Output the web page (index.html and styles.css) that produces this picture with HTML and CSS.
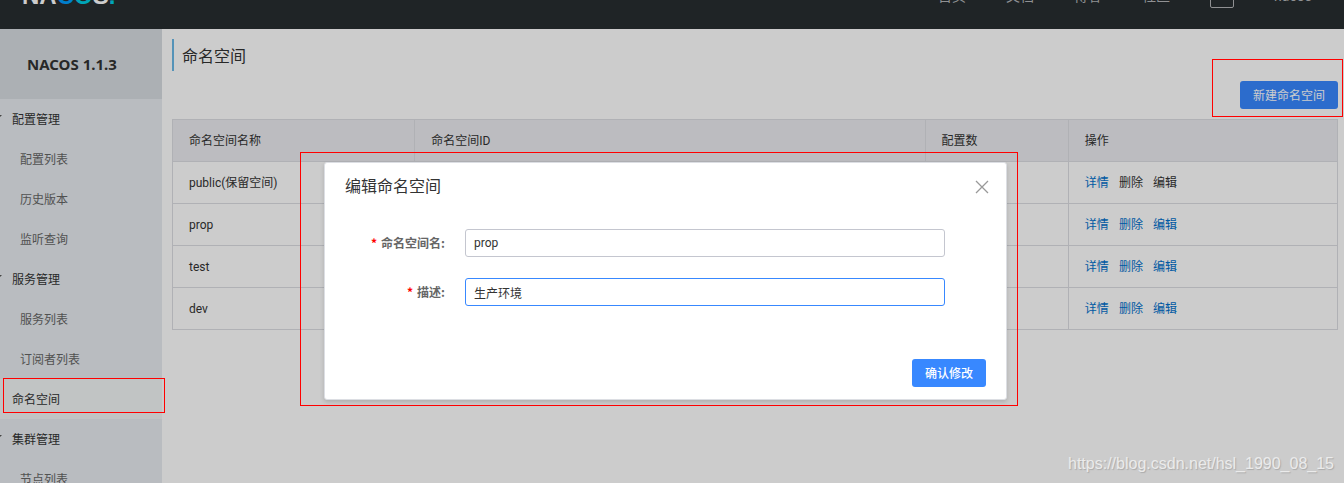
FILE: index.html
```html
<!DOCTYPE html>
<html lang="zh-CN">
<head>
  <meta charset="UTF-8">
  <meta name="viewport" content="width=device-width, initial-scale=1.0">
  <title>Nacos</title>
  <link rel="stylesheet" href="styles.css">
</head>
<body>
  <header class="header">
    <a href="#" class="logo">NA<span class="logo-c">C</span><span class="logo-o">O</span>S<span class="logo-dot">.</span></a>
    <nav class="nav">
      <a href="#">首页</a>
      <a href="#">文档</a>
      <a href="#">博客</a>
      <a href="#">社区</a>
      <button type="button" class="lang-button" aria-label="En"></button>
      <a href="#">nacos</a>
    </nav>
  </header>

  <div class="layout">
    <aside class="sidebar">
      <h1 class="sidebar-title">NACOS 1.1.3</h1>
      <ul class="menu">
        <li><a href="#" class="menu-group">配置管理</a></li>
        <li><a href="#" class="menu-sub">配置列表</a></li>
        <li><a href="#" class="menu-sub">历史版本</a></li>
        <li><a href="#" class="menu-sub">监听查询</a></li>
        <li><a href="#" class="menu-group">服务管理</a></li>
        <li><a href="#" class="menu-sub">服务列表</a></li>
        <li><a href="#" class="menu-sub">订阅者列表</a></li>
        <li><a href="#" class="menu-item active">命名空间</a></li>
        <li><a href="#" class="menu-group">集群管理</a></li>
        <li><a href="#" class="menu-sub">节点列表</a></li>
      </ul>
    </aside>

    <main class="main">
      <h2 class="page-title">命名空间</h2>
      <div class="toolbar">
        <button type="button" class="button">新建命名空间</button>
      </div>
      <table class="table">
        <thead>
          <tr>
            <th class="col-name">命名空间名称</th>
            <th class="col-id">命名空间ID</th>
            <th class="col-count">配置数</th>
            <th>操作</th>
          </tr>
        </thead>
        <tbody>
          <tr>
            <td>public(保留空间)</td>
            <td></td>
            <td></td>
            <td><div class="actions"><a href="#">详情</a><span>删除</span><span>编辑</span></div></td>
          </tr>
          <tr>
            <td>prop</td>
            <td></td>
            <td></td>
            <td><div class="actions"><a href="#">详情</a><a href="#">删除</a><a href="#">编辑</a></div></td>
          </tr>
          <tr>
            <td>test</td>
            <td></td>
            <td></td>
            <td><div class="actions"><a href="#">详情</a><a href="#">删除</a><a href="#">编辑</a></div></td>
          </tr>
          <tr>
            <td>dev</td>
            <td></td>
            <td></td>
            <td><div class="actions"><a href="#">详情</a><a href="#">删除</a><a href="#">编辑</a></div></td>
          </tr>
        </tbody>
      </table>
    </main>
  </div>

  <div class="overlay">
    <div class="dialog" role="dialog" aria-labelledby="dialog-title">
      <div class="dialog-header">
        <h2 id="dialog-title" class="dialog-title">编辑命名空间</h2>
        <button type="button" class="dialog-close" aria-label="关闭">
          <svg width="14" height="14" viewBox="0 0 14 14" fill="none" stroke="#999" stroke-width="1.3">
            <path d="M1 1l12 12M13 1L1 13"/>
          </svg>
        </button>
      </div>
      <form class="dialog-form">
        <div class="form-row">
          <label for="ns-name" class="form-label">命名空间名:</label>
          <input type="text" id="ns-name" class="form-input" value="prop">
        </div>
        <div class="form-row">
          <label for="ns-desc" class="form-label">描述:</label>
          <input type="text" id="ns-desc" class="form-input current" value="生产环境">
        </div>
      </form>
      <div class="dialog-footer">
        <button type="button" class="button button-confirm">确认修改</button>
      </div>
    </div>
  </div>

  <div class="mark mark-menu"></div>
  <div class="mark mark-create"></div>
  <div class="watermark">https://blog.csdn.net/hsl_1990_08_15</div>
</body>
</html>
```

FILE: styles.css
```css
* {
  box-sizing: border-box;
}
body {
  position: relative;
  display: flex;
  flex-direction: column;
  height: 100vh;
  margin: 0;
  overflow: hidden;
  background-color: #fff;
  color: #333;
  font-family: Roboto, "Noto Sans CJK SC", sans-serif;
  font-size: 12px;
  line-height: 20px;
}
a {
  color: #0070cc;
  text-decoration: none;
}
button,
input {
  font-family: inherit;
  font-size: 12px;
}

/* Header, scrolled partly out of view */
.header {
  display: flex;
  flex-shrink: 0;
  align-items: center;
  justify-content: space-between;
  height: 66px;
  margin-top: -37px;
  padding: 0 32px 0 22px;
  background-color: #272d30;
}
.logo {
  color: #fff;
  font-family: "Liberation Sans", sans-serif;
  font-size: 24px;
  font-weight: bold;
}
.logo-c {
  color: #009fff;
}
.logo-o,
.logo-dot {
  color: #00cfe6;
}
.nav {
  display: flex;
  align-items: center;
  gap: 40px;
  font-size: 14px;
}
.nav a {
  color: #b4b6b8;
}
.lang-button {
  width: 24px;
  height: 24px;
  padding: 0;
  border: 1px solid #b4b6b8;
  border-radius: 2px;
  background: none;
}

.layout {
  display: flex;
  flex: 1;
  min-height: 0;
}

/* Sidebar */
.sidebar {
  flex: 0 0 162px;
  overflow: hidden;
  background-color: #e8ecf0;
  font-family: "Noto Sans CJK SC", sans-serif;
}
.sidebar-title {
  margin: 0;
  padding-left: 27px;
  background-color: #d8dde1;
  font-family: "Noto Sans", sans-serif;
  font-size: 15px;
  line-height: 70px;
}
.menu {
  margin: 0;
  padding: 0;
  list-style: none;
}
.menu a {
  display: flex;
  align-items: center;
  height: 40px;
  color: #333;
}
.menu-group::before {
  content: "";
  margin: 0 10px 4px -6px;
  border: 4px solid transparent;
  border-top-color: #555;
  border-bottom: 0;
}
.menu .menu-item {
  padding-left: 12px;
}
.menu .menu-sub {
  padding-left: 20px;
  color: #666;
}
.menu .active {
  background-color: #f2f5f5;
}

/* Content */
.main {
  flex: 1;
  padding: 10px 6px 0 10px;
}
.page-title {
  margin: 0;
  padding-left: 8px;
  border-left: 2px solid #6bb8e6;
  font-family: "Noto Sans CJK SC", sans-serif;
  font-size: 16px;
  font-weight: normal;
  line-height: 32px;
}
.toolbar {
  display: flex;
  justify-content: flex-end;
  margin: 10px 0;
}
.button {
  height: 28px;
  padding: 0 13px 2px;
  border: 0;
  border-radius: 3px;
  background-color: #3888ff;
  color: #fff;
}
.table {
  width: 100%;
  border-collapse: collapse;
  table-layout: fixed;
}
.table th,
.table td {
  height: 42px;
  padding: 0 16px;
  border: 1px solid #dcdee3;
  font-weight: normal;
  text-align: left;
}
.table th {
  background-color: #ebecf0;
}
.col-name {
  width: 20.8%;
}
.col-id {
  width: 43.8%;
}
.col-count {
  width: 12.3%;
}
.actions {
  display: flex;
  gap: 10px;
}

/* Dialog */
.overlay {
  position: absolute;
  inset: 0;
  display: flex;
  align-items: flex-start;
  justify-content: center;
  padding: 162px 13px 0 0;
  background-color: rgba(0, 0, 0, 0.2);
}
.dialog {
  position: relative;
  width: 683px;
  padding: 12px 20px;
  border: 1px solid #dcdee3;
  border-radius: 3px;
  background-color: #fff;
  box-shadow: 0 2px 4px rgba(0, 0, 0, 0.15);
}
.dialog::after {
  content: "";
  position: absolute;
  inset: -11px -12px -7px -25px;
  border: 1px solid #f00;
  pointer-events: none;
}
.dialog-header {
  display: flex;
  align-items: center;
  justify-content: space-between;
}
.dialog-title {
  margin: 0;
  font-size: 16px;
  font-weight: normal;
  line-height: 24px;
}
.dialog-close {
  width: 14px;
  height: 14px;
  margin-right: -3px;
  padding: 0;
  border: 0;
  background: none;
}
.dialog-close svg {
  display: block;
}
.dialog-form {
  display: flex;
  flex-direction: column;
  gap: 21px;
  padding: 30px 41px 53px 0;
}
.form-row {
  display: flex;
  align-items: center;
}
.form-label {
  width: 120px;
  padding-right: 20px;
  color: #666;
  font-family: "Noto Sans CJK SC", sans-serif;
  font-weight: bold;
  text-align: right;
}
.form-label::before {
  content: "*";
  margin-right: 4px;
  color: #f00;
}
.form-input {
  flex: 1;
  height: 28px;
  padding: 0 8px;
  border: 1px solid #c4c6cf;
  border-radius: 3px;
  background-color: #fff;
  color: #333;
  outline: none;
}
.form-input.current,
.form-input:focus {
  border-color: #3888ff;
}
.dialog-footer {
  display: flex;
  justify-content: flex-end;
}
.button-confirm {
  font-weight: 500;
}

/* Marks drawn over the page */
.mark {
  position: absolute;
  border: 1px solid #f00;
  pointer-events: none;
}
.mark-menu {
  top: 378px;
  left: 3px;
  width: 162px;
  height: 35px;
}
.mark-create {
  top: 59px;
  right: 1px;
  width: 131px;
  height: 58px;
}
.watermark {
  position: absolute;
  right: 10px;
  bottom: 9px;
  color: #ebebeb;
  font-family: "Liberation Sans", sans-serif;
  font-size: 16px;
  text-shadow: 1px 1px 1px #aaa;
}
```
